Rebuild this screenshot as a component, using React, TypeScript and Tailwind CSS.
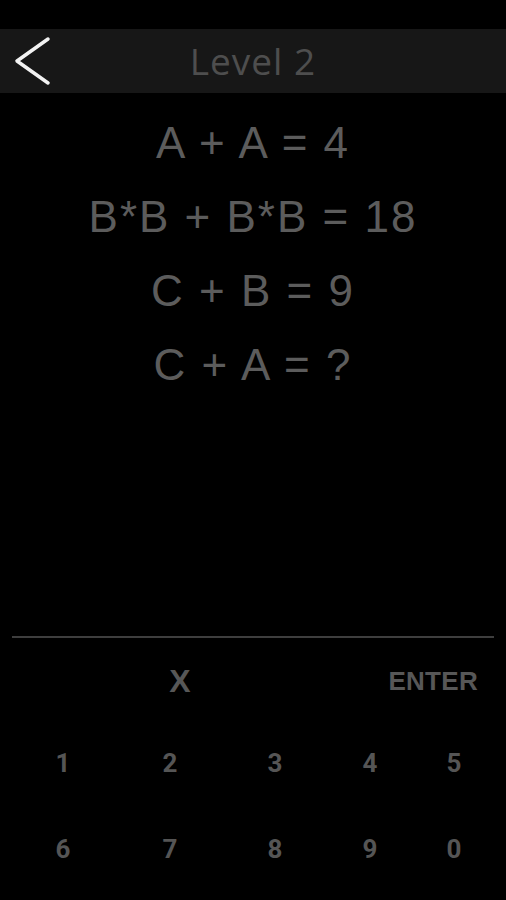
import React from "react";

const equations = ["A + A = 4", "B*B + B*B = 18", "C + B = 9", "C + A = ?"];
const rows = [
  ["1", "2", "3", "4", "5"],
  ["6", "7", "8", "9", "0"],
];

export default function App() {
  return (
    <div className="w-[506px] h-[900px] bg-black flex flex-col font-['Liberation_Sans',Arial,sans-serif]">
      <div className="h-[29px]" />
      {/* header */}
      <div className="h-[64px] bg-[#171717] flex items-center relative">
        <button className="absolute left-[12px] top-[7px]">
          <svg width="40" height="50" viewBox="0 0 40 50">
            <path d="M36 3 L5 25 L36 47" fill="none" stroke="#f2f2f2" strokeWidth="3.5" strokeLinecap="round" strokeLinejoin="round" />
          </svg>
        </button>
        <div className="flex-1 text-center text-[37px] text-[#4e4e4e] font-['Open_Sans',sans-serif] tracking-[1px]">Level 2</div>
      </div>

      {/* equations */}
      <div className="flex flex-col items-center pt-[19px]">
        {equations.map((eq) => (
          <div key={eq} className="h-[74px] leading-[62px] text-[44px] text-[#5c5c5c] tracking-[2px]">
            {eq}
          </div>
        ))}
      </div>

      <div className="flex-1" />

      <div className="mx-[12px] h-[2px] bg-[#3e3e3e]" />

      {/* keypad */}
      <div className="grid grid-cols-[106px_108px_102px_88px_80px] items-start pl-[10px] pt-[25px] h-[82px] text-[#575757] font-bold">
        <div />
        <button className="text-[32px] leading-[36px] text-center pl-[20px]">X</button>
        <div />
        <button className="col-span-2 text-[26px] leading-[36px] text-right pr-[16px] tracking-[0.3px]">ENTER</button>
      </div>
      {rows.map((row, i) => (
        <div key={i} className="grid grid-cols-[106px_108px_102px_88px_80px] pl-[10px] h-[86px] items-center text-[#555] text-[26px] font-bold font-['Roboto',sans-serif]">
          {row.map((d) => (
            <button key={d} className="text-center">{d}</button>
          ))}
        </div>
      ))}
      <div className="h-[8px]" />
    </div>
  );
}
